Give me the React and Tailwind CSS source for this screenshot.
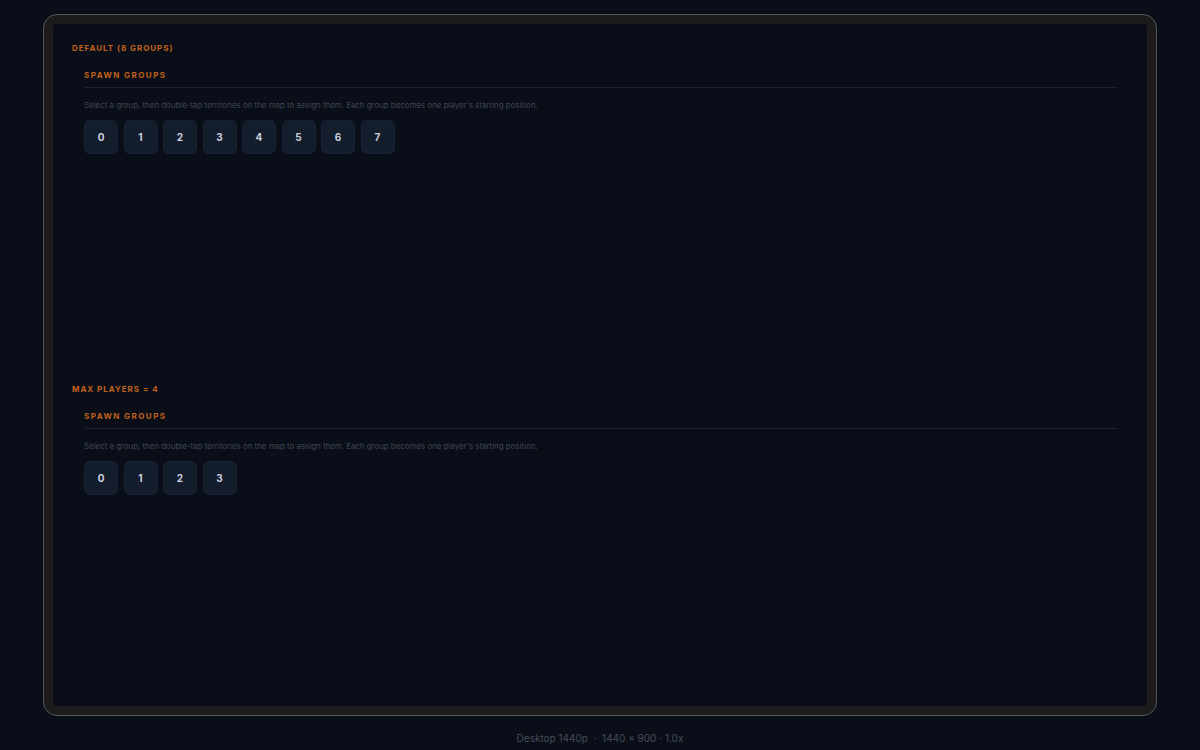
export default function App() {
  const Section = ({ title, n }) => (
    <div className="h-[341px] pt-[19px] pl-[19px] pr-[30px]">
      <div className="text-[8px] leading-[10px] font-bold tracking-[0.12em] text-[#c2621a]">{title}</div>
      <div className="pl-[12px] pt-[17px]">
        <div className="text-[8px] leading-[10px] font-bold tracking-[0.18em] text-[#c2621a] pb-[7px] border-b border-[#1a2232]">SPAWN GROUPS</div>
        <div className="text-[7.9px] leading-[9px] text-[#3e4654] mt-[13px]">Select a group, then double-tap territories on the map to assign them. Each group becomes one player's starting position.</div>
        <div className="flex gap-[5.5px] mt-[10px]">
          {Array.from({ length: n }, (_, i) => (
            <div key={i} className="w-[34px] h-[34px] rounded-[6px] bg-[#141d2c] border border-[#182234] flex items-center justify-center text-[10px] font-bold text-[#c9d1de]">{i}</div>
          ))}
        </div>
      </div>
    </div>
  );
  return (
    <div className="w-[1200px] h-[750px] bg-[#0a0e18] flex flex-col items-center pt-[14px]" style={{ fontFamily: "Inter, 'Liberation Sans', sans-serif" }}>
      <div className="w-[1114px] h-[702px] rounded-[14px] border border-[#555] bg-[#1c1c1c] p-[9px]">
        <div className="w-full h-full bg-[#0a0e18] rounded-[4px] overflow-hidden">
          <Section title="DEFAULT (8 GROUPS)" n={8} />
          <Section title="MAX PLAYERS = 4" n={4} />
        </div>
      </div>
      <div className="mt-[15px] text-[10px] text-[#454c58]">Desktop 1440p &nbsp;·&nbsp; 1440 × 900 · 1.0x</div>
    </div>
  );
}
